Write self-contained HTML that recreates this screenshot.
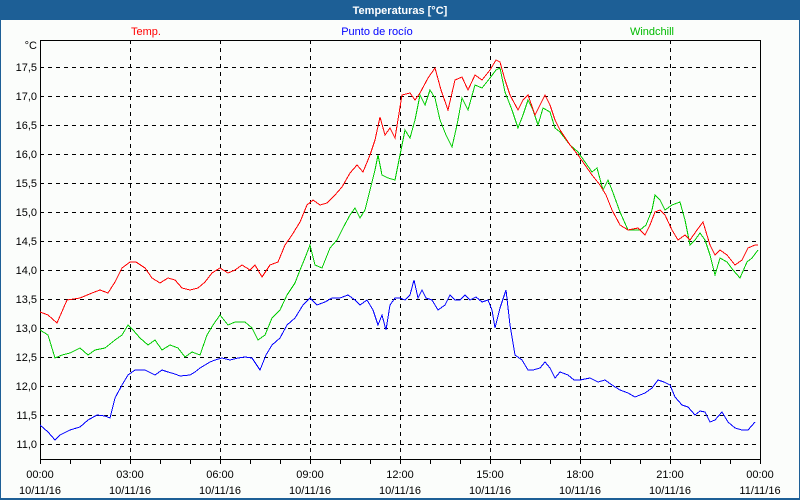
<!DOCTYPE html>
<html><head><meta charset="utf-8"><style>
html,body{margin:0;padding:0;width:800px;height:500px;overflow:hidden;background:#1d5f96}
svg{display:block}
text{font-family:"Liberation Sans",sans-serif;font-size:11px}
</style></head><body>
<svg width="800" height="500" xmlns="http://www.w3.org/2000/svg">
<rect x="0" y="0" width="800" height="500" fill="#1d5f96"/>
<rect x="1" y="20" width="798" height="478" fill="#fbfdfb"/>
<text x="400" y="14" text-anchor="middle" fill="#fff" font-weight="bold">Temperaturas [°C]</text>
<text x="146" y="35" text-anchor="middle" fill="#ff0000">Temp.</text>
<text x="377" y="35" text-anchor="middle" fill="#0000ff">Punto de rocío</text>
<text x="652" y="35" text-anchor="middle" fill="#00bb00">Windchill</text>
<g stroke="#000" stroke-width="1" stroke-dasharray="4,4" fill="none" shape-rendering="crispEdges">
<path d="M40 67.5H760M40 96.5H760M40 125.5H760M40 154.5H760M40 183.5H760M40 212.5H760M40 241.5H760M40 270.5H760M40 299.5H760M40 328.5H760M40 357.5H760M40 386.5H760M40 415.5H760M40 444.5H760"/>
<path d="M130.5 40V460M220.5 40V460M310.5 40V460M400.5 40V460M490.5 40V460M580.5 40V460M670.5 40V460"/>
</g>
<rect x="40.5" y="40.5" width="720" height="419" fill="none" stroke="#000" shape-rendering="crispEdges"/>
<g stroke="#000" shape-rendering="crispEdges"><path d="M40.5 460v4M70.5 460v4M100.5 460v4M130.5 460v4M160.5 460v4M190.5 460v4M220.5 460v4M250.5 460v4M280.5 460v4M310.5 460v4M340.5 460v4M370.5 460v4M400.5 460v4M430.5 460v4M460.5 460v4M490.5 460v4M520.5 460v4M550.5 460v4M580.5 460v4M610.5 460v4M640.5 460v4M670.5 460v4M700.5 460v4M730.5 460v4M760.5 460v4"/></g>
<g fill="#000" text-anchor="end">
<text x="37" y="49">°C</text>
<text x="37" y="71">17,5</text><text x="37" y="100">17,0</text><text x="37" y="129">16,5</text><text x="37" y="158">16,0</text><text x="37" y="187">15,5</text><text x="37" y="216">15,0</text><text x="37" y="245">14,5</text><text x="37" y="274">14,0</text><text x="37" y="303">13,5</text><text x="37" y="332">13,0</text><text x="37" y="361">12,5</text><text x="37" y="390">12,0</text><text x="37" y="419">11,5</text><text x="37" y="448">11,0</text>
</g>
<g fill="#000" text-anchor="middle">
<text x="40" y="478">00:00</text><text x="40" y="494">10/11/16</text>
<text x="130" y="478">03:00</text><text x="130" y="494">10/11/16</text>
<text x="220" y="478">06:00</text><text x="220" y="494">10/11/16</text>
<text x="310" y="478">09:00</text><text x="310" y="494">10/11/16</text>
<text x="400" y="478">12:00</text><text x="400" y="494">10/11/16</text>
<text x="490" y="478">15:00</text><text x="490" y="494">10/11/16</text>
<text x="580" y="478">18:00</text><text x="580" y="494">10/11/16</text>
<text x="670" y="478">21:00</text><text x="670" y="494">10/11/16</text>
<text x="760" y="478">00:00</text><text x="760" y="494">11/11/16</text>
</g>
<g fill="none" stroke-width="1" shape-rendering="optimizeSpeed">
<polyline stroke="#0000ff" points="40,425 48,432 55,440 60,435 70,430 80,427 88,420 97,415 105,416 110,418 115,398 122,385 128,375 135,370 145,370 155,375 162,370 168,372 175,374 180,376 190,375 195,372 200,368 205,365 210,362 215,360 222,358 230,360 238,358 245,357 252,358 260,370 266,355 272,345 280,338 287,325 295,318 303,305 310,298 317,305 325,302 332,298 340,298 348,295 355,300 360,305 367,300 373,310 378,325 382,315 386,330 390,305 395,298 400,298 405,300 410,295 414,280 418,298 422,290 426,298 432,300 438,310 445,305 450,295 455,300 460,300 465,295 470,300 476,297 482,302 488,300 492,310 495,328 500,308 506,290 510,325 515,355 522,360 528,370 533,370 540,368 545,362 550,368 555,378 560,372 568,375 574,380 580,380 590,378 598,382 605,380 612,385 620,390 628,393 635,397 645,393 652,388 658,380 664,382 670,385 675,397 682,405 688,407 695,415 700,411 705,412 710,422 715,420 722,412 728,422 735,428 742,430 748,430 755,422"/>
<polyline stroke="#00cc00" points="40,330 48,335 55,358 62,355 70,353 80,348 88,355 95,350 105,348 115,340 122,335 128,325 133,330 140,338 148,345 155,340 162,350 170,345 178,348 185,357 192,352 200,355 207,335 213,325 220,315 228,325 235,322 245,322 252,328 258,340 265,335 272,318 280,310 287,295 295,283 300,270 305,258 310,245 315,265 322,268 330,248 337,240 343,228 350,215 355,208 360,218 365,210 370,190 375,170 378,155 382,175 388,178 395,180 400,155 405,130 410,138 415,120 420,95 425,105 430,90 435,98 440,120 446,135 452,147 457,125 462,98 468,110 475,85 482,88 490,78 496,70 500,68 505,92 512,110 518,128 523,115 528,100 533,110 538,125 543,108 550,112 555,128 560,132 570,145 578,152 585,162 592,172 597,168 603,190 608,180 612,190 620,212 628,230 640,230 646,225 652,210 655,195 660,200 665,210 672,205 680,202 685,220 690,245 695,240 700,233 705,240 710,255 715,275 720,258 727,262 733,270 740,278 747,262 752,258 758,250"/>
<polyline stroke="#ff0000" points="40,312 48,315 57,323 67,300 80,298 92,293 100,290 108,293 115,282 122,268 130,262 136,262 145,268 152,278 160,283 168,278 175,280 182,288 190,290 198,288 205,282 212,273 220,268 228,273 235,270 242,265 250,270 255,265 262,277 270,265 278,262 285,245 292,235 300,222 307,205 313,200 320,205 327,203 335,195 342,187 350,173 357,165 363,172 370,155 375,140 380,117 385,135 390,128 395,138 402,95 410,93 415,100 420,93 428,78 435,68 441,90 448,110 455,80 462,77 468,90 475,75 482,80 490,70 496,60 500,62 505,80 510,95 518,110 523,100 528,95 535,115 540,105 545,95 550,105 555,120 560,130 570,145 578,155 585,165 592,175 600,185 606,195 612,210 620,225 628,230 638,228 645,235 650,225 655,212 660,210 665,215 672,230 678,240 685,235 690,240 697,230 703,222 710,245 715,255 720,250 727,255 735,265 742,260 748,248 755,245 758,245"/>
</g>
</svg>
</body></html>
